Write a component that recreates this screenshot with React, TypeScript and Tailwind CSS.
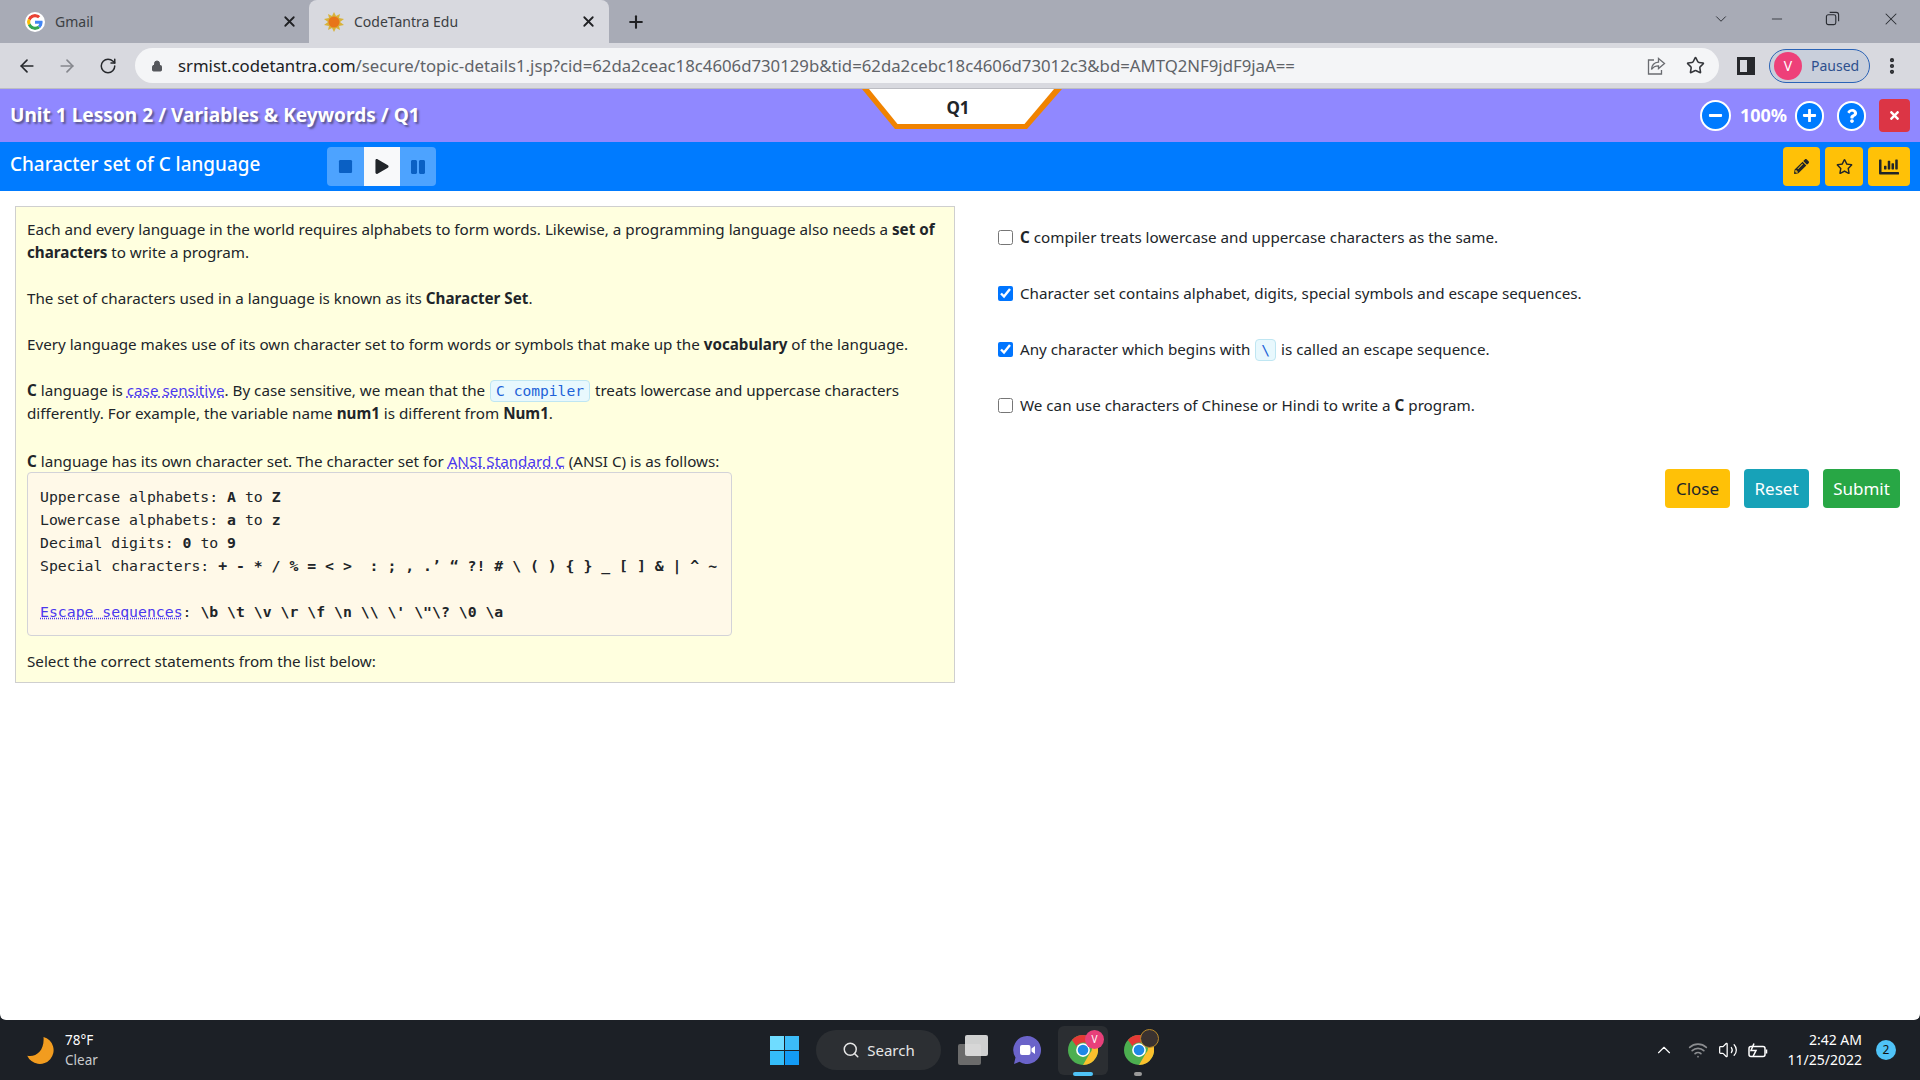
import { ArrowLeft, ArrowRight, RotateCw, Lock, Star, ChevronDown, ChevronUp, Minus, X, Plus, Search, Wifi, Volume2, MoreVertical } from 'lucide-react';
import { FaPencilAlt, FaRegStar, FaChartBar, FaMinus, FaPlus, FaQuestion, FaTimes, FaStop, FaPlay, FaPause } from 'react-icons/fa';

const mono = "font-['DejaVu_Sans_Mono','Liberation_Mono',monospace]";

function GoogleG() {
  return (
    <svg viewBox="0 0 48 48" className="w-5 h-5 bg-white rounded-full p-[2px]">
      <path fill="#EA4335" d="M24 9.500c3.500 0 6.700 1.200 9.200 3.600l6.900-6.900C35.900 2.400 30.500 0 24 0 14.600 0 6.500 5.400 2.600 13.200l8 6.200C12.500 13.700 17.800 9.500 24 9.500z" />
      <path fill="#4285F4" d="M46.900 24.500c0-1.600-.1-3.100-.4-4.500H24v9h12.900c-.6 3-2.200 5.500-4.700 7.200l7.700 6c4.500-4.200 7-10.300 7-17.700z" />
      <path fill="#FBBC05" d="M10.500 28.600c-.5-1.500-.8-3-.8-4.600s.3-3.100.8-4.600l-8-6.200C.9 16.500 0 20.100 0 24s.9 7.500 2.600 10.800l7.900-6.200z" />
      <path fill="#34A853" d="M24 48c6.500 0 11.900-2.100 15.900-5.800l-7.700-6c-2.200 1.500-4.900 2.300-8.200 2.300-6.200 0-11.500-4.200-13.400-9.900l-8 6.200C6.500 42.600 14.600 48 24 48z" />
    </svg>
  );
}

function SunIcon() {
  return (
    <svg viewBox="0 0 20 20" className="w-5 h-5">
      <path fill="#d8b23a" d="M10 0l2 4 4-2-1 4 5 1-4 3 4 3-5 1 1 4-4-2-2 4-2-4-4 2 1-4-5-1 4-3-4-3 5-1-1-4 4 2z" />
      <circle cx="10" cy="10" r="5.500" fill="#e8751a" />
    </svg>
  );
}

function ChromeIcon() {
  return (
    <svg viewBox="0 0 48 48" className="w-[30px] h-[30px]">
      <circle cx="24" cy="24" r="24" fill="#4caf50" />
      <path fill="#e53935" d="M24 0a24 24 0 0 1 20.800 12H24a12 12 0 0 0-10.400 6L6.300 7.800A24 24 0 0 1 24 0z" />
      <path fill="#fbc02d" d="M44.800 12A24 24 0 0 1 24 48l10.400-18a12 12 0 0 0 0-18z" />
      <circle cx="24" cy="24" r="11" fill="#fff" />
      <circle cx="24" cy="24" r="8.500" fill="#1e88e5" />
    </svg>
  );
}

function Chip({ children }: { children: React.ReactNode }) {
  return (
    <span className={`${mono} inline-block border border-[#bfe6f2] bg-[#e8f8fd] rounded text-[#1d62d8] text-[14.6px] leading-[20px] px-[5px] mx-[1px]`}>
      {children}
    </span>
  );
}

function DotLink({ children }: { children: React.ReactNode }) {
  return <span className="text-[#4b38ee] underline decoration-dotted">{children}</span>;
}

function CheckRow({ checked, children }: { checked?: boolean; children: React.ReactNode }) {
  return (
    <label className="flex items-center gap-[7px] h-[24px]">
      <input type="checkbox" defaultChecked={checked} className="w-[15px] h-[15px] accent-[#0075ff]" />
      <span>{children}</span>
    </label>
  );
}

export default function App() {
  return (
    <div className="h-[1080px] w-[1920px] flex flex-col overflow-hidden bg-[#1c2026] font-['Noto_Sans',sans-serif] text-[#212529]">
      {/* tab strip */}
      <div className="h-[43px] bg-[#a8abb6] flex items-end shrink-0">
        <div className="w-[309px] h-[43px] flex items-center pl-[25px] pr-[11px] text-[14px] text-[#3c4043]">
          <GoogleG />
          <span className="ml-[10px] flex-1">Gmail</span>
          <X className="w-[17px] h-[17px] text-[#202124]" strokeWidth={2.5} />
        </div>
        <div className="w-[300px] h-[43px] bg-[#d8d9df] rounded-t-lg flex items-center pl-[15px] pr-[12px] text-[14px] text-[#3c4043]">
          <SunIcon />
          <span className="ml-[10px] flex-1">CodeTantra Edu</span>
          <X className="w-[17px] h-[17px] text-[#202124]" strokeWidth={2.5} />
        </div>
        <div className="h-[43px] ml-[17px] flex items-center">
          <Plus className="w-5 h-5 text-[#202124]" strokeWidth={2.5} />
        </div>
        <div className="flex-1 h-[43px] flex items-center justify-end text-[#2a2d33]">
          <ChevronDown className="w-[18px] h-[18px] mr-[39px] mb-[6px]" strokeWidth={1.25} />
          <Minus className="w-[16px] h-[16px] mr-[40px] mb-[6px]" strokeWidth={1.25} />
          <svg viewBox="0 0 16 16" className="w-[15px] h-[15px] mr-[41px] mb-[6px]" fill="none" stroke="currentColor" strokeWidth="1.200">
            <rect x="1.500" y="4" width="10" height="10.500" rx="2" />
            <path d="M5 1.500h7a2.500 2.500 0 0 1 2.500 2.500v7" />
          </svg>
          <X className="w-[20px] h-[20px] mr-[19px] mb-[6px]" strokeWidth={1.25} />
        </div>
      </div>

      {/* address bar */}
      <div className="h-[46px] bg-[#d8d9df] border-b border-[#bcbdc3] flex items-center shrink-0 text-[#3f4146]">
        <ArrowLeft className="w-5 h-5 ml-[17px] text-[#26282c]" />
        <ArrowRight className="w-5 h-5 ml-[20px] text-[#85878d]" />
        <RotateCw className="w-[18px] h-[18px] ml-[22px] text-[#26282c]" />
        <div className="ml-[18px] w-[1584px] h-[35px] rounded-full bg-[#f4f5f7] flex items-center pl-[16px] text-[16.75px]">
          <Lock className="w-[12px] h-[14px] text-[#55575c]" fill="#55575c" />
          <span className="ml-[15px] text-[#202124]">srmist.codetantra.com</span>
          <span className="text-[#5f6368]">/secure/topic-details1.jsp?cid=62da2ceac18c4606d730129b&tid=62da2cebc18c4606d73012c3&bd=AMTQ2NF9jdF9jaA==</span>
          <div className="ml-auto flex items-center mr-[14px]">
            <svg viewBox="0 0 20 20" className="w-[20px] h-[20px] text-[#6a6c71] mr-[20px]" fill="none" stroke="currentColor" strokeWidth="1.300">
              <path d="M8 4H2.500v14h13v-4" />
              <path d="M12.500 2.500l6 5-6 5V9.800c-3.500 0-5.500 1.200-7 3.700.3-4.500 2.800-7 7-7.300z" />
            </svg>
            <Star className="w-[19px] h-[19px] text-[#33353a]" />
          </div>
        </div>
        <div className="ml-[18px] w-[18px] h-[18px] border-[3px] border-[#26282c] bg-[#d8d9df] flex justify-end">
          <div className="w-[5px] bg-[#26282c]" />
        </div>
        <div className="ml-[14px] w-[101px] h-[34px] rounded-full border border-[#2b63b5] bg-[#c9cfdb] flex items-center pl-[4px] text-[14px] text-[#2d4f8e]">
          <div className="w-[28px] h-[28px] rounded-full bg-[#ee4079] text-white flex items-center justify-center">V</div>
          <span className="ml-[9px]">Paused</span>
        </div>
        <MoreVertical className="w-5 h-5 ml-[12px] text-[#26282c]" strokeWidth={3} />
      </div>

      {/* page */}
      <div className="flex-1 bg-white rounded-b-[6px] flex flex-col relative">
        <div className="h-[53px] bg-[#9088ff] flex items-center px-[10px] shrink-0">
          <div className="text-[19.1px] font-bold text-white [text-shadow:2px_2px_2px_#5b5690]">Unit 1 Lesson 2 / Variables &amp; Keywords / Q1</div>
          <div className="ml-auto flex items-center text-white">
            <div className="w-[31px] h-[31px] rounded-full bg-[#007bff] border-2 border-white flex items-center justify-center">
              <FaMinus className="w-[15px] h-[15px]" />
            </div>
            <span className="ml-[9px] text-[18px] font-bold">100%</span>
            <div className="ml-[8px] w-[29px] h-[30px] rounded-full bg-[#007bff] border-2 border-white flex items-center justify-center">
              <FaPlus className="w-[15px] h-[15px]" />
            </div>
            <div className="ml-[13px] w-[29px] h-[30px] rounded-full bg-[#007bff] border-2 border-white flex items-center justify-center">
              <FaQuestion className="w-[12px] h-[14px]" />
            </div>
            <div className="ml-[13px] w-[31px] h-[33px] rounded bg-[#dc3545] flex items-center justify-center">
              <FaTimes className="w-[13px] h-[13px]" />
            </div>
          </div>
        </div>

        <div className="h-[49px] bg-[#007bff] flex items-center px-[10px] shrink-0">
          <div className="w-[317px] text-[18.9px] font-medium text-white -mt-[4px]">Character set of C language</div>
          <div className="flex h-[39px] rounded overflow-hidden bg-[#4da3ff]">
            <div className="w-[37px] flex items-center justify-center"><FaStop className="w-[15px] h-[15px] text-[#0a60c4]" /></div>
            <div className="w-[36px] bg-[#f8f9fa] flex items-center justify-center"><FaPlay className="w-[14px] h-[15px] text-[#212529]" /></div>
            <div className="w-[36px] flex items-center justify-center"><FaPause className="w-[16px] h-[16px] text-[#0a60c4]" /></div>
          </div>
          <div className="ml-auto flex gap-[5px] text-[#212529]">
            <div className="w-[37px] h-[39px] rounded bg-[#ffc107] flex items-center justify-center"><FaPencilAlt className="w-[15px] h-[15px]" /></div>
            <div className="w-[38px] h-[39px] rounded bg-[#ffc107] flex items-center justify-center"><FaRegStar className="w-[17px] h-[17px]" /></div>
            <div className="w-[42px] h-[39px] rounded bg-[#ffc107] flex items-center justify-center"><FaChartBar className="w-[20px] h-[20px]" /></div>
          </div>
        </div>

        {/* Q1 tab hanging from the top of the page */}
        <div className="absolute left-[862px] top-0 w-[200px] h-[40px]">
          <svg viewBox="0 0 200 40" className="absolute inset-0 w-full h-full">
            <polygon points="0,0 33,40 165,40 200,0" fill="#f08300" />
            <polygon points="7,0 35.500,35 162.500,35 192,0" fill="#fff" />
          </svg>
          <div className="relative text-center text-[17px] font-bold leading-[38px] pr-[8px]">Q1</div>
        </div>

        <div className="flex-1 flex items-start text-[15.2px] leading-[23px]">
          <div className="ml-[15px] mt-[15px] w-[940px] h-[477px] border border-[#cfcfcf] bg-[#ffffdf] px-[11px] pt-[11px]">
            <p>Each and every language in the world requires alphabets to form words. Likewise, a programming language also needs a <b>set of characters</b> to write a program.</p>
            <p className="mt-[23px]">The set of characters used in a language is known as its <b>Character Set</b>.</p>
            <p className="mt-[23px]">Every language makes use of its own character set to form words or symbols that make up the <b>vocabulary</b> of the language.</p>
            <p className="mt-[23px]"><b>C</b> language is <DotLink>case sensitive</DotLink>. By case sensitive, we mean that the <Chip>C compiler</Chip> treats lowercase and uppercase characters differently. For example, the variable name <b>num1</b> is different from <b>Num1</b>.</p>
            <p className="mt-[25px]"><b>C</b> language has its own character set. The character set for <DotLink>ANSI Standard C</DotLink> (ANSI C) is as follows:</p>
            <div className={`${mono} w-[705px] h-[164px] -mt-[1px] border border-[#d3d3d8] rounded bg-[#fff9e8] px-[12px] pt-[12px] text-[14.8px] whitespace-pre`}>
              <div>Uppercase alphabets: <b>A</b> to <b>Z</b></div>
              <div>Lowercase alphabets: <b>a</b> to <b>z</b></div>
              <div>Decimal digits: <b>0</b> to <b>9</b></div>
              <div>Special characters: <b>+ - * / % = &lt; &gt;  : ; , .’ “ ?! # \ ( ) {'{'} {'}'} _ [ ] &amp; | ^ ~</b></div>
              <div className="h-[23px]" />
              <div><DotLink>Escape sequences</DotLink>: <b>\b \t \v \r \f \n \\ \' \"\? \0 \a</b></div>
            </div>
            <p className="mt-[14px]">Select the correct statements from the list below:</p>
          </div>

          <div className="flex-1 pl-[43px] pr-[20px] pt-[34px]">
            <div className="flex flex-col gap-[32px]">
              <CheckRow><b>C</b> compiler treats lowercase and uppercase characters as the same.</CheckRow>
              <CheckRow checked>Character set contains alphabet, digits, special symbols and escape sequences.</CheckRow>
              <CheckRow checked>Any character which begins with <Chip>\</Chip> is called an escape sequence.</CheckRow>
              <CheckRow>We can use characters of Chinese or Hindi to write a <b>C</b> program.</CheckRow>
            </div>
            <div className="mt-[52px] flex justify-end gap-[14px] text-[17px]">
              <div className="h-[39px] w-[65px] rounded bg-[#ffc107] flex items-center justify-center">Close</div>
              <div className="h-[39px] w-[65px] rounded bg-[#17a2b8] text-white flex items-center justify-center">Reset</div>
              <div className="h-[39px] w-[77px] rounded bg-[#28a745] text-white flex items-center justify-center">Submit</div>
            </div>
          </div>
        </div>
      </div>

      {/* windows taskbar */}
      <div className="h-[60px] shrink-0 flex items-center text-white">
        <div className="w-[770px] flex items-center pl-[26px]">
          <svg viewBox="0 0 24 24" className="w-[30px] h-[30px]">
            <path fill="#f29c1f" d="M14 1.500a11 11 0 1 1-13 15c7 1.500 14-4 13-15z" />
          </svg>
          <div className="ml-[9px] text-[13.500px] leading-[20px]">
            <div>78°F</div>
            <div className="text-[#c9cbce]">Clear</div>
          </div>
        </div>
        <div className="w-[29px] h-[29px] grid grid-cols-2 gap-[1px]">
          <div className="bg-[#6fdcff]" /><div className="bg-[#3cbcf8]" />
          <div className="bg-[#35bdf9]" /><div className="bg-[#139bf5]" />
        </div>
        <div className="ml-[17px] w-[125px] h-[40px] rounded-full bg-[#2c2f33] flex items-center justify-center gap-[7px] text-[15px] text-[#e6e6e6]">
          <Search className="w-[18px] h-[18px]" />
          Search
        </div>
        <div className="ml-[17px] relative w-[30px] h-[30px]">
          <div className="absolute left-0 bottom-0 w-[23px] h-[21px] rounded-[2px] bg-[#6b6b6b]" />
          <div className="absolute right-0 top-0 w-[23px] h-[21px] rounded-[2px] bg-[#e3e3e3] opacity-90" />
        </div>
        <svg viewBox="0 0 28 28" className="ml-[25px] w-[28px] h-[28px]">
          <path fill="#6a63c9" d="M14 0a14 14 0 1 1-7.500 25.800L1 28l1.500-6.500A14 14 0 0 1 14 0z" />
          <rect x="7" y="9" width="10.500" height="10" rx="2" fill="#fff" />
          <path fill="#fff" d="M18.500 12.500l3.500-2.500v8l-3.500-2.500z" />
        </svg>
        <div className="ml-[17px] relative w-[50px] h-[49px] rounded-md bg-[#2b2e32] flex items-center justify-center">
          <ChromeIcon />
          <div className="absolute right-[4px] top-[4px] w-[19px] h-[19px] rounded-full bg-[#e8407a] text-[10px] flex items-center justify-center">V</div>
          <div className="absolute left-[15px] bottom-[-1px] w-[20px] h-[4px] rounded-full bg-[#4fc3f7]" />
        </div>
        <div className="ml-[13px] relative w-[36px] h-[49px] flex items-center justify-center">
          <ChromeIcon />
          <div className="absolute right-[-2px] top-[3px] w-[19px] h-[19px] rounded-full bg-[#3a3230] border border-[#b8892a]" />
          <div className="absolute left-[13px] bottom-[-1px] w-[8px] h-[4px] rounded-full bg-[#9a9a9a]" />
        </div>
        <div className="flex-1 flex items-center justify-end">
          <ChevronUp className="w-[22px] h-[22px] mr-[13px]" strokeWidth={1.25} />
          <Wifi className="w-[20px] h-[20px] mr-[10px] text-[#8b8d90]" />
          <Volume2 className="w-[20px] h-[20px] mr-[10px]" strokeWidth={1.5} />
          <svg viewBox="0 0 20 14" className="w-[20px] h-[15px] mr-[20px]" fill="none" stroke="#fff" strokeWidth="1.500">
            <rect x="1" y="3" width="16" height="10" rx="2" />
            <path d="M18.500 6v4" />
            <path d="M6 0L3 7h5l-3 6" />
          </svg>
          <div className="text-right text-[14px] leading-[20px]">
            <div>2:42 AM</div>
            <div>11/25/2022</div>
          </div>
          <div className="ml-[14px] mr-[24px] w-[20px] h-[20px] rounded-full bg-[#4fc3f7] text-[#111] text-[12px] flex items-center justify-center">2</div>
        </div>
      </div>
    </div>
  );
}
